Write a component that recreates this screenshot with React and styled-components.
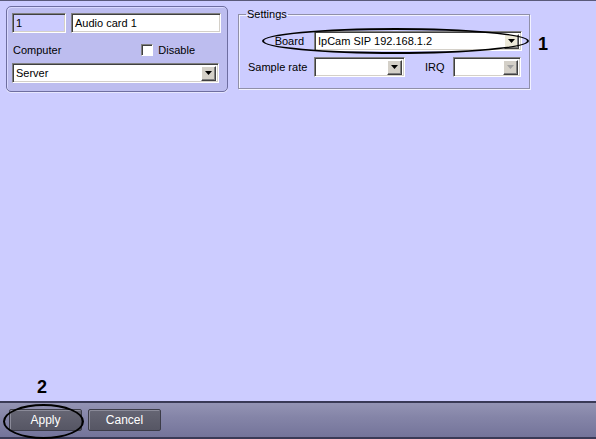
import React from "react";
import styled, { createGlobalStyle } from "styled-components";

const Global = createGlobalStyle`
  html, body { margin: 0; padding: 0; }
  body { font-family: "Liberation Sans", Arial, sans-serif; font-size: 11px; }
  #root { width: 596px; height: 439px; }
`;

const Page = styled.div`
  position: relative;
  width: 596px;
  height: 439px;
  display: flex;
  flex-direction: column;
  background: #ccccff;
  box-sizing: border-box;
  border-top: 1px solid #5a5a7a;
  overflow: hidden;
  color: #000;
`;

const Main = styled.div`
  flex: 1;
  display: flex;
  align-items: flex-start;
  padding: 5px 0 0 6px;
`;

const Panel = styled.div`
  box-sizing: border-box;
  width: 222px;
  height: 86px;
  border: 1px solid #6e6ea0;
  border-radius: 5px;
  background: #bdbdef;
  box-shadow: 0 1px 0 #e6e6ff, inset 1px 1px 0 #d8d8ff;
  padding: 6px 0 0 5px;
  display: flex;
  flex-direction: column;
`;

const Row = styled.div`
  display: flex;
  align-items: center;
  gap: ${(p) => p.gap || 0}px;
  margin-top: ${(p) => p.mt || 0}px;
  height: ${(p) => p.h || 20}px;
  padding-right: ${(p) => p.pr || 0}px;
`;

const Field = styled.div`
  box-sizing: border-box;
  flex: none;
  width: ${(p) => p.w}px;
  height: 20px;
  background: ${(p) => p.bg || "#fff"};
  border-top: 1px solid #808080;
  border-left: 1px solid #808080;
  border-right: 1px solid #ffffff;
  border-bottom: 1px solid #ffffff;
  box-shadow: inset 1px 1px 0 #404040, inset -1px -1px 0 #d4d0c8;
  padding: 0 3px;
  display: flex;
  align-items: center;
  font-size: 11px;
  white-space: nowrap;
`;

const FieldText = styled.span`
  flex: 1;
  overflow: hidden;
`;

const DropBtn = styled.div`
  box-sizing: border-box;
  width: 15px;
  height: 15px;
  margin-right: -1px;
  background: ${(p) => (p.light ? "#ece9d8" : "#d4d0c8")};
  border-top: 1px solid #ffffff;
  border-left: 1px solid #ffffff;
  border-right: 1px solid #404040;
  border-bottom: 1px solid #404040;
  box-shadow: inset -1px -1px 0 #808080;
  display: flex;
  align-items: center;
  justify-content: center;
`;

const Label = styled.span`
  font-size: 11px;
  white-space: nowrap;
  color: #000;
  margin-left: ${(p) => p.ml || 0}px;
  margin-right: ${(p) => p.mr || 0}px;
`;

const Check = styled.span`
  box-sizing: border-box;
  width: 12px;
  height: 12px;
  background: #fff;
  border-top: 1px solid #808080;
  border-left: 1px solid #808080;
  border-right: 1px solid #fff;
  border-bottom: 1px solid #fff;
  box-shadow: inset 1px 1px 0 #404040;
  margin-left: auto;
`;

const Group = styled.fieldset`
  box-sizing: border-box;
  width: 292px;
  height: 81px;
  margin: 2px 0 0 10px;
  padding: 0 0 0 9px;
  border: 1px solid #9090a8;
  box-shadow: 1px 1px 0 #f2f2ff, inset 1px 1px 0 #f2f2ff;
  border-radius: 0;
  min-width: 0;
`;

const Legend = styled.legend`
  padding: 0 1px;
  margin-left: -2px;
  font-size: 11px;
  line-height: 13px;
`;

const Grid = styled.div`
  display: grid;
  grid-template-columns: 57px auto;
  grid-auto-rows: 20px;
  column-gap: 9px;
  row-gap: 6px;
  align-items: center;
  padding-top: 10px;
`;

const RLabel = styled(Label)`
  text-align: right;
  padding-right: ${(p) => p.pr || 0}px;
`;

const Bar = styled.div`
  height: 38px;
  flex: none;
  box-sizing: border-box;
  border-top: 2px solid #3a3a56;
  border-bottom: 2px solid #3a3a56;
  background: linear-gradient(#9494b4, #8585a8 40%, #74749a);
  display: flex;
  align-items: flex-start;
  gap: 6px;
  padding: 6px 0 0 9px;
`;

const Btn = styled.div`
  box-sizing: border-box;
  width: ${(p) => p.w}px;
  height: 22px;
  background: linear-gradient(#666674, #565664);
  border: 1px solid #3c3c48;
  box-shadow: inset 1px 1px 0 #8a8a98;
  border-radius: 2px;
  color: #fff;
  display: flex;
  align-items: center;
  justify-content: center;
  font-size: 12px;
`;

const Ellipse = styled.div`
  position: absolute;
  left: ${(p) => p.x}px;
  top: ${(p) => p.y}px;
  width: ${(p) => p.w}px;
  height: ${(p) => p.h}px;
  box-sizing: border-box;
  border: 2.5px solid #000;
  border-radius: 50%;
  pointer-events: none;
`;

const Num = styled.div`
  position: absolute;
  left: ${(p) => p.x}px;
  top: ${(p) => p.y}px;
  font-family: "Liberation Sans", Arial, sans-serif;
  font-weight: bold;
  font-size: 18px;
  line-height: 18px;
  color: #000;
`;

const Arrow = ({ color = "#000" }) => (
  <svg width="7" height="4" viewBox="0 0 7 4">
    <path d="M0 0h7L3.5 4z" fill={color} />
  </svg>
);

const Combo = ({ w, text, light, disabled }) => (
  <Field w={w}>
    <FieldText>{text}</FieldText>
    <DropBtn light={light}>
      <Arrow color={disabled ? "#a0a0a0" : "#000"} />
    </DropBtn>
  </Field>
);

export default function App() {
  return (
    <>
      <Global />
      <Page>
        <Main>
          <Panel>
            <Row gap={5}>
              <Field w={54} bg="#ccccff">1</Field>
              <Field w={150}>Audio card 1</Field>
            </Row>
            <Row mt={9} h={16} pr={32}>
              <Label ml={1}>Computer</Label>
              <Check />
              <Label ml={5}>Disable</Label>
            </Row>
            <Row mt={5}>
              <Combo w={207} text="Server" />
            </Row>
          </Panel>
          <Group>
            <Legend>Settings</Legend>
            <Grid>
              <RLabel pr={1}>Board</RLabel>
              <Combo w={208} text="IpCam SIP 192.168.1.2" light />
              <RLabel>Sample rate</RLabel>
              <Row>
                <Combo w={91} />
                <Label ml={20} mr={8}>IRQ</Label>
                <Combo w={68} disabled />
              </Row>
            </Grid>
          </Group>
        </Main>
        <Bar>
          <Btn w={73}>Apply</Btn>
          <Btn w={73}>Cancel</Btn>
        </Bar>
        <Ellipse x={262} y={27} w={267} h={26} />
        <Num x={538} y={34}>1</Num>
        <Ellipse x={3} y={403} w={81} h={35} />
        <Num x={37} y={377}>2</Num>
      </Page>
    </>
  );
}
